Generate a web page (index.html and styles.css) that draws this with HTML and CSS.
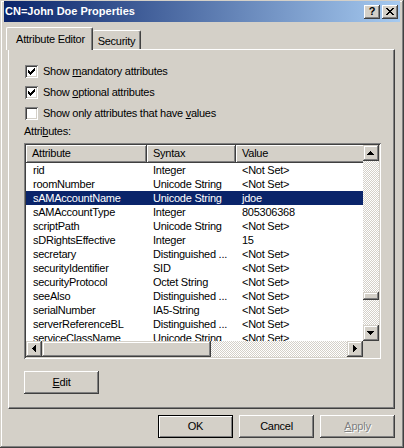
FILE: index.html
```html
<!DOCTYPE html>
<html>
<head>
<meta charset="utf-8">
<title>CN=John Doe Properties</title>
<link rel="stylesheet" href="styles.css">
</head>
<body>
<div class="window">
  <div class="titlebar">
    <span class="title">CN=John Doe Properties</span>
    <div class="caption-btns">
      <span class="cbtn help">?</span>
      <span class="cbtn close"><svg width="8" height="7" viewBox="0 0 8 7"><path d="M0 0h2v1h-2z M6 0h2v1h-2z M1 1h2v1h-2z M5 1h2v1h-2z M2 2h4v1h-4z M3 3h2v1h-2z M2 4h4v1h-4z M1 5h2v1h-2z M5 5h2v1h-2z M0 6h2v1h-2z M6 6h2v1h-2z" fill="#000"/></svg></span>
    </div>
  </div>
  <div class="client">
    <div class="tabs">
      <div class="tab active">Attribute Editor</div>
      <div class="tab">Security</div>
    </div>
    <div class="panel">
      <div class="checks">
        <div class="check">
          <span class="box"><svg width="13" height="13" viewBox="0 0 13 13"><path d="M3 5h1v3h-1z M4 6h1v3h-1z M5 7h1v3h-1z M6 6h1v3h-1z M7 5h1v3h-1z M8 4h1v3h-1z M9 3h1v3h-1z" fill="#000"/></svg></span>
          <span class="check-label">Show <u>m</u>andatory attributes</span>
        </div>
        <div class="check">
          <span class="box"><svg width="13" height="13" viewBox="0 0 13 13"><path d="M3 5h1v3h-1z M4 6h1v3h-1z M5 7h1v3h-1z M6 6h1v3h-1z M7 5h1v3h-1z M8 4h1v3h-1z M9 3h1v3h-1z" fill="#000"/></svg></span>
          <span class="check-label">Show <u>o</u>ptional attributes</span>
        </div>
        <div class="check">
          <span class="box"></span>
          <span class="check-label">Show only attributes that have <u>v</u>alues</span>
        </div>
      </div>
      <div class="list-label">Attri<u>b</u>utes:</div>
      <div class="listbox">
        <div class="lv">
          <div class="lv-header">
            <div class="hcell c1">Attribute</div>
            <div class="hcell c2">Syntax</div>
            <div class="hcell c3">Value</div>
          </div>
          <div class="lv-rows">
            <div class="row"><span>rid</span><span>Integer</span><span>&lt;Not Set&gt;</span></div>
            <div class="row"><span>roomNumber</span><span>Unicode String</span><span>&lt;Not Set&gt;</span></div>
            <div class="row selected"><span>sAMAccountName</span><span>Unicode String</span><span>jdoe</span></div>
            <div class="row"><span>sAMAccountType</span><span>Integer</span><span>805306368</span></div>
            <div class="row"><span>scriptPath</span><span>Unicode String</span><span>&lt;Not Set&gt;</span></div>
            <div class="row"><span>sDRightsEffective</span><span>Integer</span><span>15</span></div>
            <div class="row"><span>secretary</span><span>Distinguished ...</span><span>&lt;Not Set&gt;</span></div>
            <div class="row"><span>securityIdentifier</span><span>SID</span><span>&lt;Not Set&gt;</span></div>
            <div class="row"><span>securityProtocol</span><span>Octet String</span><span>&lt;Not Set&gt;</span></div>
            <div class="row"><span>seeAlso</span><span>Distinguished ...</span><span>&lt;Not Set&gt;</span></div>
            <div class="row"><span>serialNumber</span><span>IA5-String</span><span>&lt;Not Set&gt;</span></div>
            <div class="row"><span>serverReferenceBL</span><span>Distinguished ...</span><span>&lt;Not Set&gt;</span></div>
            <div class="row"><span>serviceClassName</span><span>Unicode String</span><span>&lt;Not Set&gt;</span></div>
          </div>
        </div>
        <div class="vscroll">
          <div class="sbtn"><svg width="16" height="16" viewBox="0 0 16 16"><path d="M7 6h1v1h-1z M6 7h3v1h-3z M5 8h5v1h-5z M4 9h7v1h-7z" fill="#000"/></svg></div>
          <div class="vtrack"><div class="thumb vthumb"></div></div>
          <div class="sbtn"><svg width="16" height="16" viewBox="0 0 16 16"><path d="M4 6h7v1h-7z M5 7h5v1h-5z M6 8h3v1h-3z M7 9h1v1h-1z" fill="#000"/></svg></div>
        </div>
        <div class="hscroll">
          <div class="sbtn"><svg width="16" height="16" viewBox="0 0 16 16"><path d="M6 7h1v1h-1z M7 6h1v3h-1z M8 5h1v5h-1z M9 4h1v7h-1z" fill="#000"/></svg></div>
          <div class="htrack"><div class="thumb hthumb"></div></div>
          <div class="sbtn"><svg width="16" height="16" viewBox="0 0 16 16"><path d="M6 4h1v7h-1z M7 5h1v5h-1z M8 6h1v3h-1z M9 7h1v1h-1z" fill="#000"/></svg></div>
        </div>
        <div class="corner"></div>
      </div>
      <button class="btn edit"><u>E</u>dit</button>
    </div>
    <div class="footer">
      <button class="btn default">OK</button>
      <button class="btn">Cancel</button>
      <button class="btn disabled"><u>A</u>pply</button>
    </div>
  </div>
</div>
</body>
</html>
```

FILE: styles.css
```css
* { box-sizing: border-box; }
html, body { margin: 0; padding: 0; }
body {
  width: 404px;
  height: 448px;
  overflow: hidden;
  background: #d4d0c8;
  font-family: "Liberation Sans", Arial, sans-serif;
  font-size: 11px;
  letter-spacing: -0.25px;
  color: #000;
}
u { text-decoration: underline; text-underline-offset: 1px; }

.window {
  width: 404px;
  height: 448px;
  background: #d4d0c8;
  padding: 1px 4px 4px 4px;
  display: flex;
  flex-direction: column;
  box-shadow: inset -1px -1px #404040, inset 1px 1px #d4d0c8, inset -2px -2px #808080, inset 2px 2px #fff;
}

.titlebar {
  height: 21px;
  flex: none;
  display: flex;
  align-items: center;
  justify-content: space-between;
  padding: 0 2px 0 1px;
  background: linear-gradient(to right, #0a246a, #a6caf0);
}
.title {
  color: #fff;
  font-weight: bold;
  font-size: 11px;
  letter-spacing: 0;
  line-height: 13px;
}
.caption-btns { display: flex; gap: 2px; }
.cbtn {
  width: 16px;
  height: 14px;
  background: #d4d0c8;
  display: flex;
  align-items: center;
  justify-content: center;
  box-shadow: inset -1px -1px #404040, inset 1px 1px #fff, inset -2px -2px #808080;
  font-weight: bold;
  font-size: 11px;
  letter-spacing: 0;
  line-height: 12px;
}
.cbtn.help { padding-bottom: 1px; }

.client {
  flex: 1;
  display: flex;
  flex-direction: column;
  padding: 5px 5px 0 4px;
}

.tabs {
  height: 22px;
  display: flex;
  align-items: flex-end;
  margin-left: -2px;
  position: relative;
  z-index: 1;
}
.tab {
  border-top: 1px solid #fff;
  border-left: 1px solid #fff;
  border-right: 1px solid #404040;
  box-shadow: inset -1px 0 #808080;
  border-top-left-radius: 2px;
  border-top-right-radius: 2px;
  background: #d4d0c8;
  line-height: 13px;
  text-align: center;
}
.tab.active {
  width: 87px;
  height: 23px;
  margin-bottom: -1px;
  padding-top: 5px;
  padding-left: 2px;
}
.tab:not(.active) {
  width: 48px;
  height: 19px;
  padding-top: 4px;
  border-left: none;
}

.panel {
  width: 387px;
  height: 360px;
  flex: none;
  background: #d4d0c8;
  border-top: 1px solid #fff;
  border-left: 1px solid #fff;
  border-right: 1px solid #404040;
  border-bottom: 1px solid #404040;
  box-shadow: inset -1px -1px #808080;
  padding: 15px 0 0 15px;
  display: flex;
  flex-direction: column;
  align-items: flex-start;
}

.checks { display: flex; flex-direction: column; gap: 8px; }
.check { display: flex; align-items: center; height: 13px; gap: 5px; padding-left: 1px; }
.box {
  width: 13px;
  height: 13px;
  flex: none;
  background: #fff;
  box-shadow: inset 1px 1px #808080, inset -1px -1px #fff, inset 2px 2px #404040, inset -2px -2px #d4d0c8;
  display: block;
}
.box svg { display: block; }
.check-label { line-height: 13px; white-space: nowrap; }

.list-label { margin-top: 5px; line-height: 13px; }

.listbox {
  margin-top: 5px;
  width: 357px;
  height: 216px;
  padding: 2px;
  background: #fff;
  box-shadow: inset 1px 1px #808080, inset -1px -1px #fff, inset 2px 2px #404040, inset -2px -2px #d4d0c8;
  display: grid;
  grid-template-columns: 337px 16px;
  grid-template-rows: 196px 16px;
}

.lv { overflow: hidden; background: #fff; }
.lv-header { display: flex; height: 18px; background: #d4d0c8; }
.hcell {
  height: 18px;
  flex: none;
  padding: 2px 0 0 6px;
  line-height: 13px;
  box-shadow: inset -1px -1px #404040, inset 1px 1px #fff, inset -2px -2px #808080;
}
.c1 { width: 121px; }
.c2 { width: 89px; }
.c3 { width: 140px; }

.row {
  display: grid;
  grid-template-columns: 121px 89px 150px;
  height: 14px;
  line-height: 14px;
  white-space: nowrap;
}
.row span { padding-left: 7px; overflow: hidden; }
.row span + span { padding-left: 6px; }
.row.selected { background: #0a246a; color: #fff; }

.vscroll { display: flex; flex-direction: column; }
.hscroll { display: flex; }
.sbtn {
  width: 16px;
  height: 16px;
  flex: none;
  background: #d4d0c8;
  box-shadow: inset -1px -1px #404040, inset 1px 1px #d4d0c8, inset -2px -2px #808080, inset 2px 2px #fff;
}
.sbtn svg { display: block; }
.vtrack, .htrack {
  flex: 1;
  background: repeating-conic-gradient(#d4d0c8 0 25%, #fff 0 50%) 0 0 / 2px 2px;
}
.thumb {
  background: #d4d0c8;
  box-shadow: inset -1px -1px #404040, inset 1px 1px #d4d0c8, inset -2px -2px #808080, inset 2px 2px #fff;
}
.vthumb { height: 8px; margin-top: 131px; }
.hthumb { width: 169px; height: 16px; }
.corner { background: #d4d0c8; }

.btn {
  width: 75px;
  height: 23px;
  padding: 0;
  border: none;
  margin: 0;
  background: #d4d0c8;
  font-family: inherit;
  font-size: 11px;
  letter-spacing: -0.25px;
  color: #000;
  line-height: 13px;
  box-shadow: inset -1px -1px #404040, inset 1px 1px #fff, inset -2px -2px #808080;
}
.btn.edit { margin-top: 12px; }
.btn.default {
  border: 1px solid #000;
  box-shadow: inset 1px 1px #fff, inset -1px -1px #808080;
}
.btn.disabled { color: #808080; text-shadow: 1px 1px #fff; }

.footer {
  display: flex;
  justify-content: flex-end;
  gap: 6px;
  padding-top: 6px;
}
```
